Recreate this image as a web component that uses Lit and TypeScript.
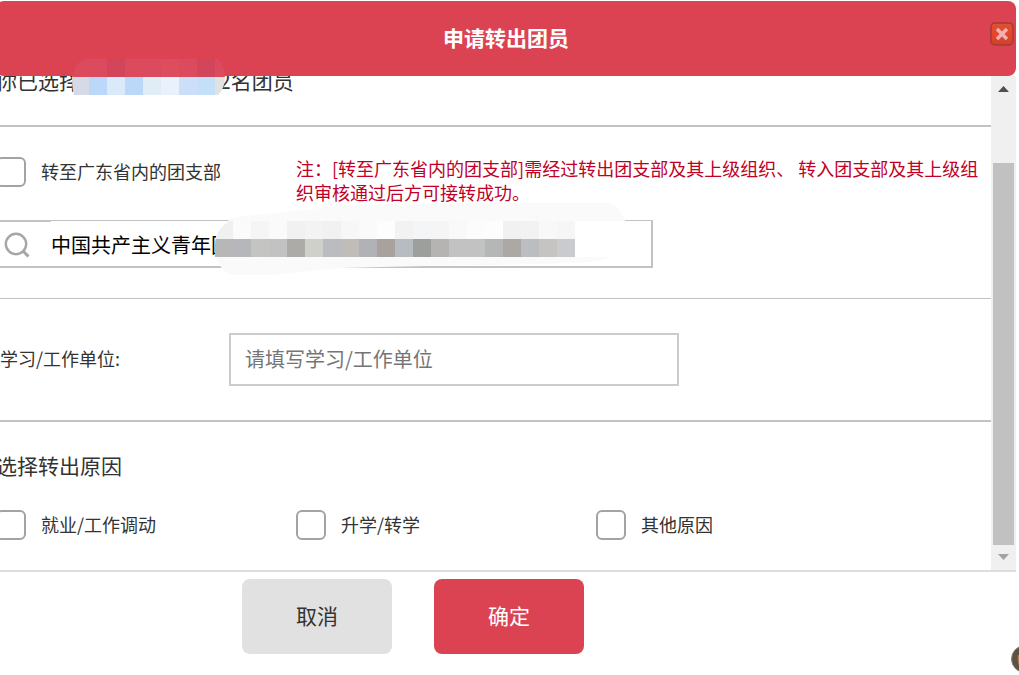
import { LitElement, html, svg, css } from "lit";
import { customElement } from "lit/decorators.js";

const NAME_MASK_TOP = ["#db4b5d", "#db4b5d", "#d1465b", "#db4b5d", "#db4b5d", "#dc4d5e", "#db4b5d", "#d1465b", "#db4b5d"];
const NAME_MASK = ["#d5dae6", "#bbd8f8", "#dbeafb", "#bbd8f8", "#e0edf6", "#e8f1fc", "#cddef8", "#c5dff8", "#e2e2e0"];
const ORG_MASK_TOP = [
  "#f0f0f0", "#fbfbfb", "#f5f5f5", "#fafafa", "#f1f1f1", "#f3f3f3", "#f1f1f1", "#f7f7f7", "#fafafa", "#fdfdfd",
  "#f2f2f2", "#f3f5f7", "#f5f5f5", "#f9f9f9", "#fcfcfc", "#fdfdfd", "#f1f1f1", "#f2f2f2", "#f8f8f8", "#f6f6f6",
];
const ORG_MASK = [
  "#b7b7b7", "#b5b7ba", "#c4c4c2", "#c2c2c3", "#adaba8", "#d0d0ca", "#babcbf", "#bfbcb9", "#b1b2b6", "#a8a29e",
  "#b7bcc0", "#9d9f9d", "#b5b4b2", "#c2c2c2", "#c2c2c2", "#b5b7b6", "#aba8a6", "#bcbdc0", "#c6c4c2", "#cacbce",
];

const cells = (colors: string[], x: number, y: number) =>
  colors.map((c, i) => svg`<rect x=${x + i * 18} y=${y} width="18" height="18" fill=${c} shape-rendering="crispEdges"></rect>`);

@customElement("app-root")
export class AppRoot extends LitElement {
  static styles = css`
    :host {
      display: block;
      position: relative;
      min-height: 100vh;
      overflow: hidden;
      background: #fff;
      color: #333;
      font: 400 18px/24px "Noto Sans CJK SC", sans-serif;
    }
    * { box-sizing: border-box; }
    input, button { font: inherit; color: inherit; margin: 0; }
    .dialog { margin: 0 3px 0 -4px; padding-top: 1px; }
    .header {
      position: relative;
      z-index: 1;
      display: flex;
      align-items: center;
      justify-content: center;
      height: 75px;
      padding-bottom: 4px;
      background: #db4353;
      border-radius: 8px;
    }
    .title { margin: 0; font-size: 21px; line-height: 32px; font-weight: 700; color: #fff; }
    .close {
      position: absolute;
      right: 2px;
      top: 21px;
      width: 24px;
      height: 24px;
      padding: 0;
      border: 0;
      background: none;
    }
    svg { display: block; }
    .body { display: flex; border-bottom: 2px solid #ddd; }
    .content { flex: 1; min-width: 0; margin-top: -12px; }
    .row { border-bottom: 2px solid #c2c2c2; }
    .selected { height: 63px; font-size: 21px; line-height: 32px; display: flex; clip-path: inset(12px 0 0 0); }
    .masked { width: 139px; }
    .target { padding: 30px 0; border-bottom-width: 1px; }
    .options { display: grid; grid-template-columns: 300px 1fr; }
    .reasons { display: grid; grid-template-columns: repeat(3, 300px); }
    .option { display: flex; align-items: center; gap: 15px; height: 30px; line-height: 24px; }
    .option span { padding-bottom: 2px; }
    .tick {
      appearance: none;
      width: 30px;
      height: 30px;
      border: 2px solid #a3a3a3;
      border-radius: 6px;
      background: #fff;
    }
    .note { margin: -1px 8px 0 0; color: #c00026; }
    .search {
      position: relative;
      display: flex;
      width: 657px;
      height: 48px;
      margin-top: 16px;
      border: 2px solid #c2c2c2;
      border-width: 0 2px 2px 0;
    }
    .lens { width: 55px; border-top: 2px solid #c2c2c2; padding: 10px 0 0 8px; }
    .query {
      flex: 1;
      min-width: 0;
      padding: 3px 0 0;
      border: 0;
      border-top: 1px solid #c2c2c2;
      background: none;
      font-size: 20px;
      color: #000;
      outline: 0;
    }
    .org-mask { position: absolute; left: 219px; top: -18px; }
    .name-mask { position: absolute; left: 76px; top: 57px; }
    .unit { display: flex; align-items: center; padding: 34px 0; }
    .unit-label { width: 233px; padding: 0 0 4px 4px; }
    .unit-input {
      width: 450px;
      height: 53px;
      padding: 0 14px 2px;
      border: 2px solid #ccc;
      border-radius: 0;
      font-size: 20px;
      outline: 0;
    }
    .unit-input::placeholder { color: #757575; opacity: 1; }
    .why { padding: 27px 0 30px; }
    .subtitle { margin: 0 0 29px; font-size: 21px; line-height: 32px; font-weight: 400; }
    .scrollbar {
      display: flex;
      flex-direction: column;
      align-items: center;
      width: 25px;
      padding: 10px 2px;
      background: #f0f0f0;
    }
    .thumb { flex: 1; width: 21px; margin: 71px 0 9px; background: #c1c1c1; }
    .footer { display: flex; gap: 42px; padding: 7px 0 21px 246px; }
    .btn {
      width: 150px;
      height: 75px;
      padding: 0 0 4px;
      border: 0;
      border-radius: 8px;
      background: #e1e1e1;
      font-size: 21px;
    }
    .primary { background: #db4353; color: #fff; }
    .avatar { position: absolute; right: -20px; top: 645px; }
  `;

  private option(id: string, text: string) {
    return html`<label class="option" for=${id}><input class="tick" type="checkbox" id=${id}><span>${text}</span></label>`;
  }

  private orgMask() {
    return svg`<svg class="org-mask" width="412" height="76" viewBox="215 202 412 76">
      <path d="M215 245C215 232 223 222 235 217C270 214 300 210 330 207C380 203 440 203 608 203Q620 206 625 221H575V257H612C600 261 590 262 575 263C500 265 470 265 425 266L340 268C310 270 290 275 262 275H233C221 271 215 262 215 245Z" fill="#fafafa"></path>
      <clipPath id="org"><path d="M215 245C215 232 223 224 235 218H576V257H215Z"></path></clipPath>
      <g clip-path="url(#org)">${cells(ORG_MASK_TOP, 215, 221)}${cells(ORG_MASK, 215, 239)}</g>
    </svg>`;
  }

  private nameMask() {
    return svg`<svg class="name-mask" width="154" height="38" viewBox="72 58 154 38">
      <clipPath id="name"><path d="M72 78Q74 64 84 59H218Q225 66 225 78Q224 90 218 95H74Q72 88 72 78Z"></path></clipPath>
      <g clip-path="url(#name)">${cells(NAME_MASK_TOP, 71, 59)}${cells(NAME_MASK, 71, 77)}</g>
    </svg>`;
  }

  render() {
    return html`
      <section class="dialog" role="dialog" aria-labelledby="title">
        <header class="header">
          <h1 class="title" id="title">申请转出团员</h1>
          <button class="close" type="button" aria-label="关闭">
            <svg width="24" height="24" viewBox="0 0 24 24">
              <defs><linearGradient id="g" x1="0" y1="0" x2="0" y2="1">
                <stop offset="0" stop-color="#d9542f"></stop><stop offset=".5" stop-color="#e6462c"></stop><stop offset="1" stop-color="#c9442a"></stop>
              </linearGradient></defs>
              <rect x="1" y="1" width="22" height="22" rx="4" fill="url(#g)" stroke="#a83a32" stroke-width="1.5"></rect>
              <path d="M7 7L17 17M17 7L7 17" stroke="#f4b0b4" stroke-width="3.4"></path>
            </svg>
          </button>
          ${this.nameMask()}
        </header>
        <div class="body">
          <div class="content">
            <div class="row selected"><span>你已选择</span><span class="masked"></span><span>2名团员</span></div>
            <div class="row target">
              <div class="options">
                ${this.option("inside", "转至广东省内的团支部")}
                <p class="note">注：[转至广东省内的团支部]需经过转出团支部及其上级组织、 转入团支部及其上级组织审核通过后方可接转成功。</p>
              </div>
              <div class="search">
                <span class="lens">
                  <svg width="26" height="26" viewBox="0 0 26 26" fill="none" stroke="#a6a6a6">
                    <circle cx="12" cy="12" r="10.2" stroke-width="2.4"></circle>
                    <path d="M19.5 19.5L24.5 24.5" stroke-width="3"></path>
                  </svg>
                </span>
                <input class="query" type="text" aria-label="搜索团支部" .value=${"中国共产主义青年团"}>
                ${this.orgMask()}
              </div>
            </div>
            <div class="row unit">
              <label class="unit-label" for="unit">学习/工作单位:</label>
              <input class="unit-input" id="unit" type="text" placeholder="请填写学习/工作单位">
            </div>
            <div class="why">
              <h2 class="subtitle">选择转出原因</h2>
              <div class="reasons">
                ${this.option("job", "就业/工作调动")}
                ${this.option("school", "升学/转学")}
                ${this.option("other", "其他原因")}
              </div>
            </div>
          </div>
          <div class="scrollbar" aria-hidden="true">
            <svg width="11" height="6" viewBox="0 0 11 6"><path d="M0 6L5.5 0L11 6Z" fill="#505050"></path></svg>
            <div class="thumb"></div>
            <svg width="11" height="6" viewBox="0 0 11 6"><path d="M0 0L5.5 6L11 0Z" fill="#a3a3a3"></path></svg>
          </div>
        </div>
        <footer class="footer">
          <button class="btn" type="button">取消</button>
          <button class="btn primary" type="button">确定</button>
        </footer>
      </section>
      <svg class="avatar" width="28" height="28" viewBox="0 0 28 28">
        <circle cx="14" cy="14" r="13.5" fill="#5a5242" stroke="#8b8578"></circle>
        <path d="M7 10Q6 15 8 21H20V8Z" fill="#b5784f"></path>
      </svg>
    `;
  }
}
